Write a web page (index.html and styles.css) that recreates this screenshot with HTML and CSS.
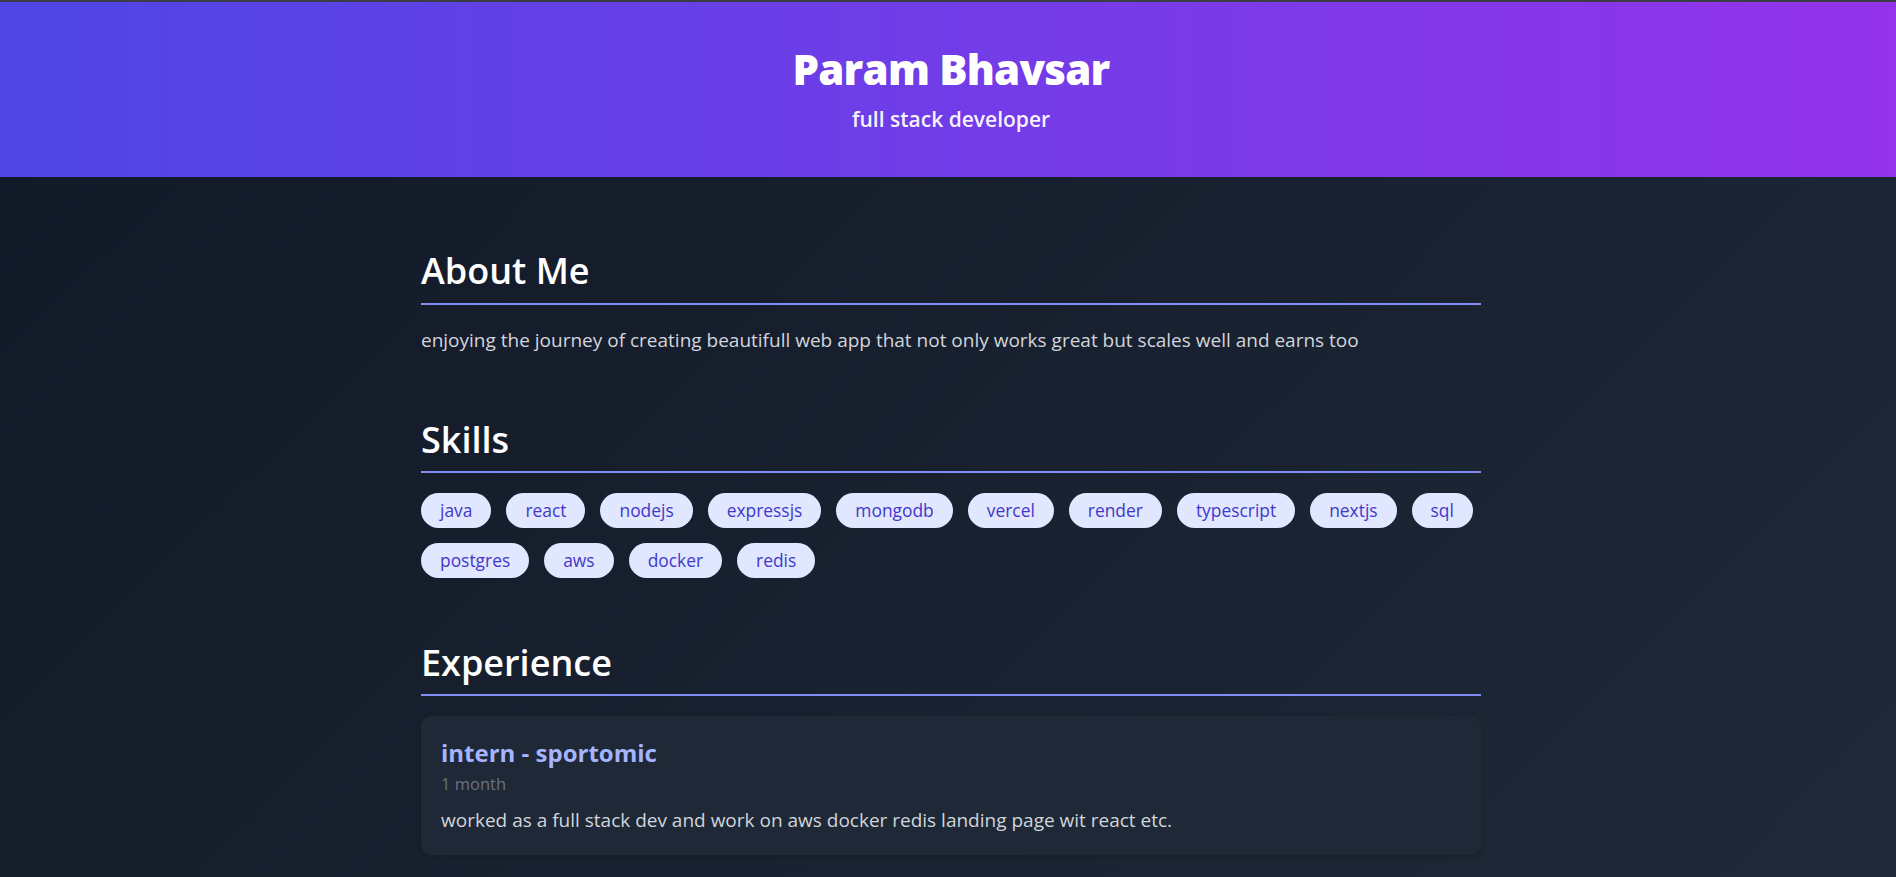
FILE: index.html
```html
<!DOCTYPE html>
<html lang="en">
<head>
<meta charset="utf-8">
<title>Param Bhavsar</title>
<link rel="stylesheet" href="styles.css">
</head>
<body>
<header class="hero">
  <h1 class="hero-name">Param Bhavsar</h1>
  <p class="hero-role">full stack developer</p>
</header>
<main class="main">
  <div class="container">
    <section class="section">
      <h2 class="section-title">About Me</h2>
      <p class="about-text">enjoying the journey of creating beautifull web app that not only works great but scales well and earns too</p>
    </section>
    <section class="section">
      <h2 class="section-title">Skills</h2>
      <ul class="skills">
        <li class="skill">java</li>
        <li class="skill">react</li>
        <li class="skill">nodejs</li>
        <li class="skill">expressjs</li>
        <li class="skill">mongodb</li>
        <li class="skill">vercel</li>
        <li class="skill">render</li>
        <li class="skill">typescript</li>
        <li class="skill">nextjs</li>
        <li class="skill">sql</li>
        <li class="skill">postgres</li>
        <li class="skill">aws</li>
        <li class="skill">docker</li>
        <li class="skill">redis</li>
      </ul>
    </section>
    <section class="section">
      <h2 class="section-title">Experience</h2>
      <article class="job">
        <h3 class="job-title">intern - sportomic</h3>
        <div class="job-duration">1 month</div>
        <p class="job-desc">worked as a full stack dev and work on aws docker redis landing page wit react etc.</p>
      </article>
    </section>
  </div>
</main>
</body>
</html>
```
FILE: styles.css
```css
* { box-sizing: border-box; }

html, body {
  margin: 0;
  padding: 0;
}

body {
  min-height: 100vh;
  font-family: "Open Sans", "Noto Sans", "Liberation Sans", sans-serif;
  color: #d1d5db;
  background: linear-gradient(135deg, #111827 0%, #1f2937 100%);
  background-attachment: fixed;
}

.hero {
  border-top: 2px solid #3b3d44;
  background: linear-gradient(90deg, #4f46e5 0%, #9333ea 100%);
  padding: 42px 0 42px 6px;
  text-align: center;
  color: #fff;
}

.hero-name {
  margin: 0 0 9.5px;
  font-size: 42px;
  line-height: 1.2;
  font-weight: 800;
  letter-spacing: -0.8px;
  color: #ffffff;
}

.hero-role {
  margin: 0;
  font-size: 21px;
  line-height: 1.5;
  font-weight: 600;
  color: rgba(255, 255, 255, 0.96);
}

.main {
  padding: 72px 0 8px 6px;
}

.container {
  max-width: 1060px;
  margin: 0 auto;
  display: flex;
  flex-direction: column;
  gap: 63px;
}

.section-title {
  margin: 0 0 20px;
  padding-bottom: 10px;
  border-bottom: 2px solid #818cf8;
  font-size: 36px;
  line-height: 1.2;
  font-weight: 600;
  color: #ffffff;
}

.about-text {
  margin: 0;
  font-size: 19px;
  line-height: 1.6;
  color: #d1d5db;
}

.skills {
  list-style: none;
  margin: 0;
  padding: 0;
  display: flex;
  flex-wrap: wrap;
  gap: 15px 15px;
}

.skill {
  background: #e0e7ff;
  color: #4338ca;
  font-size: 17.4px;
  font-weight: 500;
  line-height: 21px;
  padding: 7px 19px;
  border-radius: 20px;
}

.job {
  background: #1e2837;
  border-radius: 10px;
  padding: 20px;
  box-shadow: 0 2px 6px rgba(0, 0, 0, 0.15);
}

.job-title {
  margin: 0 0 2px;
  font-size: 24px;
  line-height: 1.4;
  font-weight: 700;
  color: #a5b4fc;
}

.job-duration {
  font-size: 16.5px;
  line-height: 1.5;
  color: #6b7280;
}

.job-desc {
  margin: 8px 0 0;
  font-size: 19px;
  line-height: 1.6;
  color: #d1d5db;
}
```
